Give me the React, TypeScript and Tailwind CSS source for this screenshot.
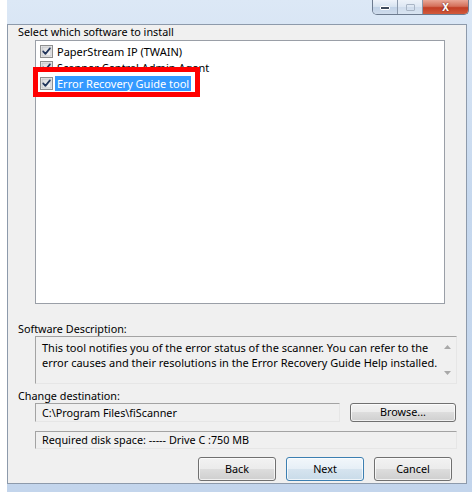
import React from "react";

const FONT = { fontFamily: '"Noto Sans", "Liberation Sans", Arial, sans-serif' };

function Check() {
  return (
    <svg width="13" height="13" viewBox="0 0 13 13" className="shrink-0">
      <defs>
        <linearGradient id="cbg" x1="0" y1="0" x2="1" y2="1">
          <stop offset="0" stopColor="#d9dadb" />
          <stop offset="1" stopColor="#f7f7f7" />
        </linearGradient>
      </defs>
      <rect x="0.5" y="0.5" width="12" height="12" fill="#f4f4f4" stroke="#8e8f8f" />
      <rect x="2" y="2" width="9" height="9" fill="url(#cbg)" stroke="#b9bcc0" strokeWidth="0.8" />
      <path d="M3.2 6.4 L5.4 8.9 L9.9 3.4" fill="none" stroke="#21355b" strokeWidth="1.7" strokeLinecap="round" strokeLinejoin="round" />
    </svg>
  );
}

function Row({ text, selected }: { text: string; selected?: boolean }) {
  return (
    <div className="h-[16px] flex items-center pl-[4px]">
      <Check />
      <span
        className={
          "ml-[2px] px-[2px] h-[15px] leading-[15px] text-[11px] whitespace-nowrap " +
          (selected ? "bg-[#3399ff] text-white" : "text-black")
        }
      >
        {text}
      </span>
    </div>
  );
}

function WinButton({ label, primary }: { label: string; primary?: boolean }) {
  return (
    <div
      className={
        "w-[78px] h-[24px] rounded-[3px] border flex items-center justify-center text-[10.8px] text-black shadow-[inset_0_0_0_1px_rgba(255,255,255,0.7)] " +
        (primary
          ? "border-[#3c7fb1] bg-[linear-gradient(to_bottom,#f2f7fb_0%,#e6eff6_50%,#d6e4ef_50%,#c9dbe9_100%)]"
          : "border-[#707070] bg-[linear-gradient(to_bottom,#f2f2f2_0%,#ebebeb_50%,#dddddd_50%,#cfcfcf_100%)]")
      }
    >
      {label}
    </div>
  );
}

export default function App() {
  return (
    <div className="w-[472px] h-[492px] bg-white pl-[7px] overflow-hidden" style={FONT}>
      <div className="h-[492px] flex flex-col bg-[linear-gradient(to_bottom,#dce8f6_0%,#c6d8ee_40%,#c3d5ec_100%)]">
        {/* title bar */}
        <div className="h-[24px] flex justify-end items-start pr-[3px]">
          <div className="flex h-[15px] rounded-b-[5px] border border-t-0 border-[#6d7b8f] overflow-hidden">
            <div className="w-[25px] h-full flex items-center justify-center border-r border-[#8a98ab] bg-[linear-gradient(to_bottom,#eef3fa_0%,#d6e2f0_50%,#c0d1e6_50%,#cfdcec_100%)]">
              <div className="w-[10px] h-[4px] mt-[2px] bg-[#3f4b5c] border border-white rounded-[1px]" />
            </div>
            <div className="w-[25px] h-full flex items-center justify-center border-r border-[#8a98ab] bg-[linear-gradient(to_bottom,#edf2f9_0%,#dde7f3_50%,#cfdcec_50%,#d9e4f1_100%)]">
              <div className="w-[9px] h-[7px] mt-[1px] border border-[#a9b5c5] rounded-[1px]" />
            </div>
            <div className="w-[45px] h-full flex items-center justify-center bg-[linear-gradient(to_bottom,#e9a797_0%,#d4705a_45%,#c23e25_55%,#d25a3c_100%)]">
              <span className="text-white text-[10px] font-bold leading-none mt-[-1px] [text-shadow:0_0_2px_#5a1a10]">
                X
              </span>
            </div>
          </div>
        </div>

        {/* client area */}
        <div className="mr-[5px] border border-[#8d9aab] bg-[#f0f0f0] flex flex-col">
          <div className="h-[14px] leading-[14px] pl-[10px] text-[10.8px] text-black">
            Select which software to install
          </div>

          <div className="relative mt-[1px] ml-[27px] w-[410px] h-[264px] bg-white border border-[#9a9fa7] pt-[2px]">
            <Row text="PaperStream IP (TWAIN)" />
            <div className="relative z-0">
              <Row text="Scanner Central Admin Agent" />
            </div>
            <div className="absolute left-[-3px] top-[26px] w-[167px] h-[30px] border-[5px] border-[#ff0000] bg-white z-10" />
            <div className="relative z-20">
              <Row text="Error Recovery Guide tool" selected />
            </div>
          </div>

          <div className="mt-[18px] h-[14px] leading-[14px] pl-[10px] text-[10.8px] text-black">
            Software Description:
          </div>

          <div className="relative ml-[27px] w-[422px] h-[48px] border border-t-[#a3a3a3] border-l-[#a3a3a3] border-b-[#e6e6e6] border-r-[#e6e6e6] bg-[#f0f0f0] pt-[3px] pl-[6px] pr-[18px] text-[11px] leading-[15px] text-black">
            <div className="whitespace-nowrap">
              This tool notifies you of the error status of the scanner. You can refer to the
            </div>
            <div className="whitespace-nowrap">
              error causes and their resolutions in the Error Recovery Guide Help installed.
            </div>
            <div className="absolute right-[2px] top-[1px] bottom-[1px] w-[14px] flex flex-col items-center justify-between py-[7px]">
              <svg width="7" height="4" viewBox="0 0 7 4">
                <path d="M0 4 L3.5 0 L7 4 Z" fill="#a8a8a8" />
              </svg>
              <svg width="7" height="4" viewBox="0 0 7 4">
                <path d="M0 0 L3.5 4 L7 0 Z" fill="#a8a8a8" />
              </svg>
            </div>
          </div>

          <div className="mt-[5px] h-[14px] leading-[14px] pl-[10px] text-[10.8px] text-black">
            Change destination:
          </div>

          <div className="flex h-[19px]">
            <div className="ml-[27px] w-[305px] h-[19px] border border-t-[#a3a3a3] border-l-[#a3a3a3] border-b-[#e6e6e6] border-r-[#e6e6e6] bg-[#f0f0f0] pl-[6px] text-[10.8px] leading-[17px] text-black whitespace-nowrap">
              C:\Program Files\fiScanner
            </div>
            <div className="ml-[10px] w-[106px] h-[19px] rounded-[3px] border border-[#707070] flex items-center justify-center text-[10.8px] text-black bg-[linear-gradient(to_bottom,#f2f2f2_0%,#ebebeb_50%,#dddddd_50%,#cfcfcf_100%)] shadow-[inset_0_0_0_1px_rgba(255,255,255,0.7)]">
              Browse...
            </div>
          </div>

          <div className="mt-[9px] ml-[27px] w-[422px] h-[18px] border border-t-[#a3a3a3] border-l-[#a3a3a3] border-b-[#e6e6e6] border-r-[#e6e6e6] bg-[#f0f0f0] pl-[6px] text-[10.8px] leading-[16px] text-black whitespace-nowrap">
            Required disk space: ----- Drive C :750 MB
          </div>

          <div className="mt-[8px] mb-[2px] flex justify-end gap-[10px] pr-[14px]">
            <WinButton label="Back" />
            <WinButton label="Next" primary />
            <WinButton label="Cancel" />
          </div>
        </div>
      </div>
    </div>
  );
}
